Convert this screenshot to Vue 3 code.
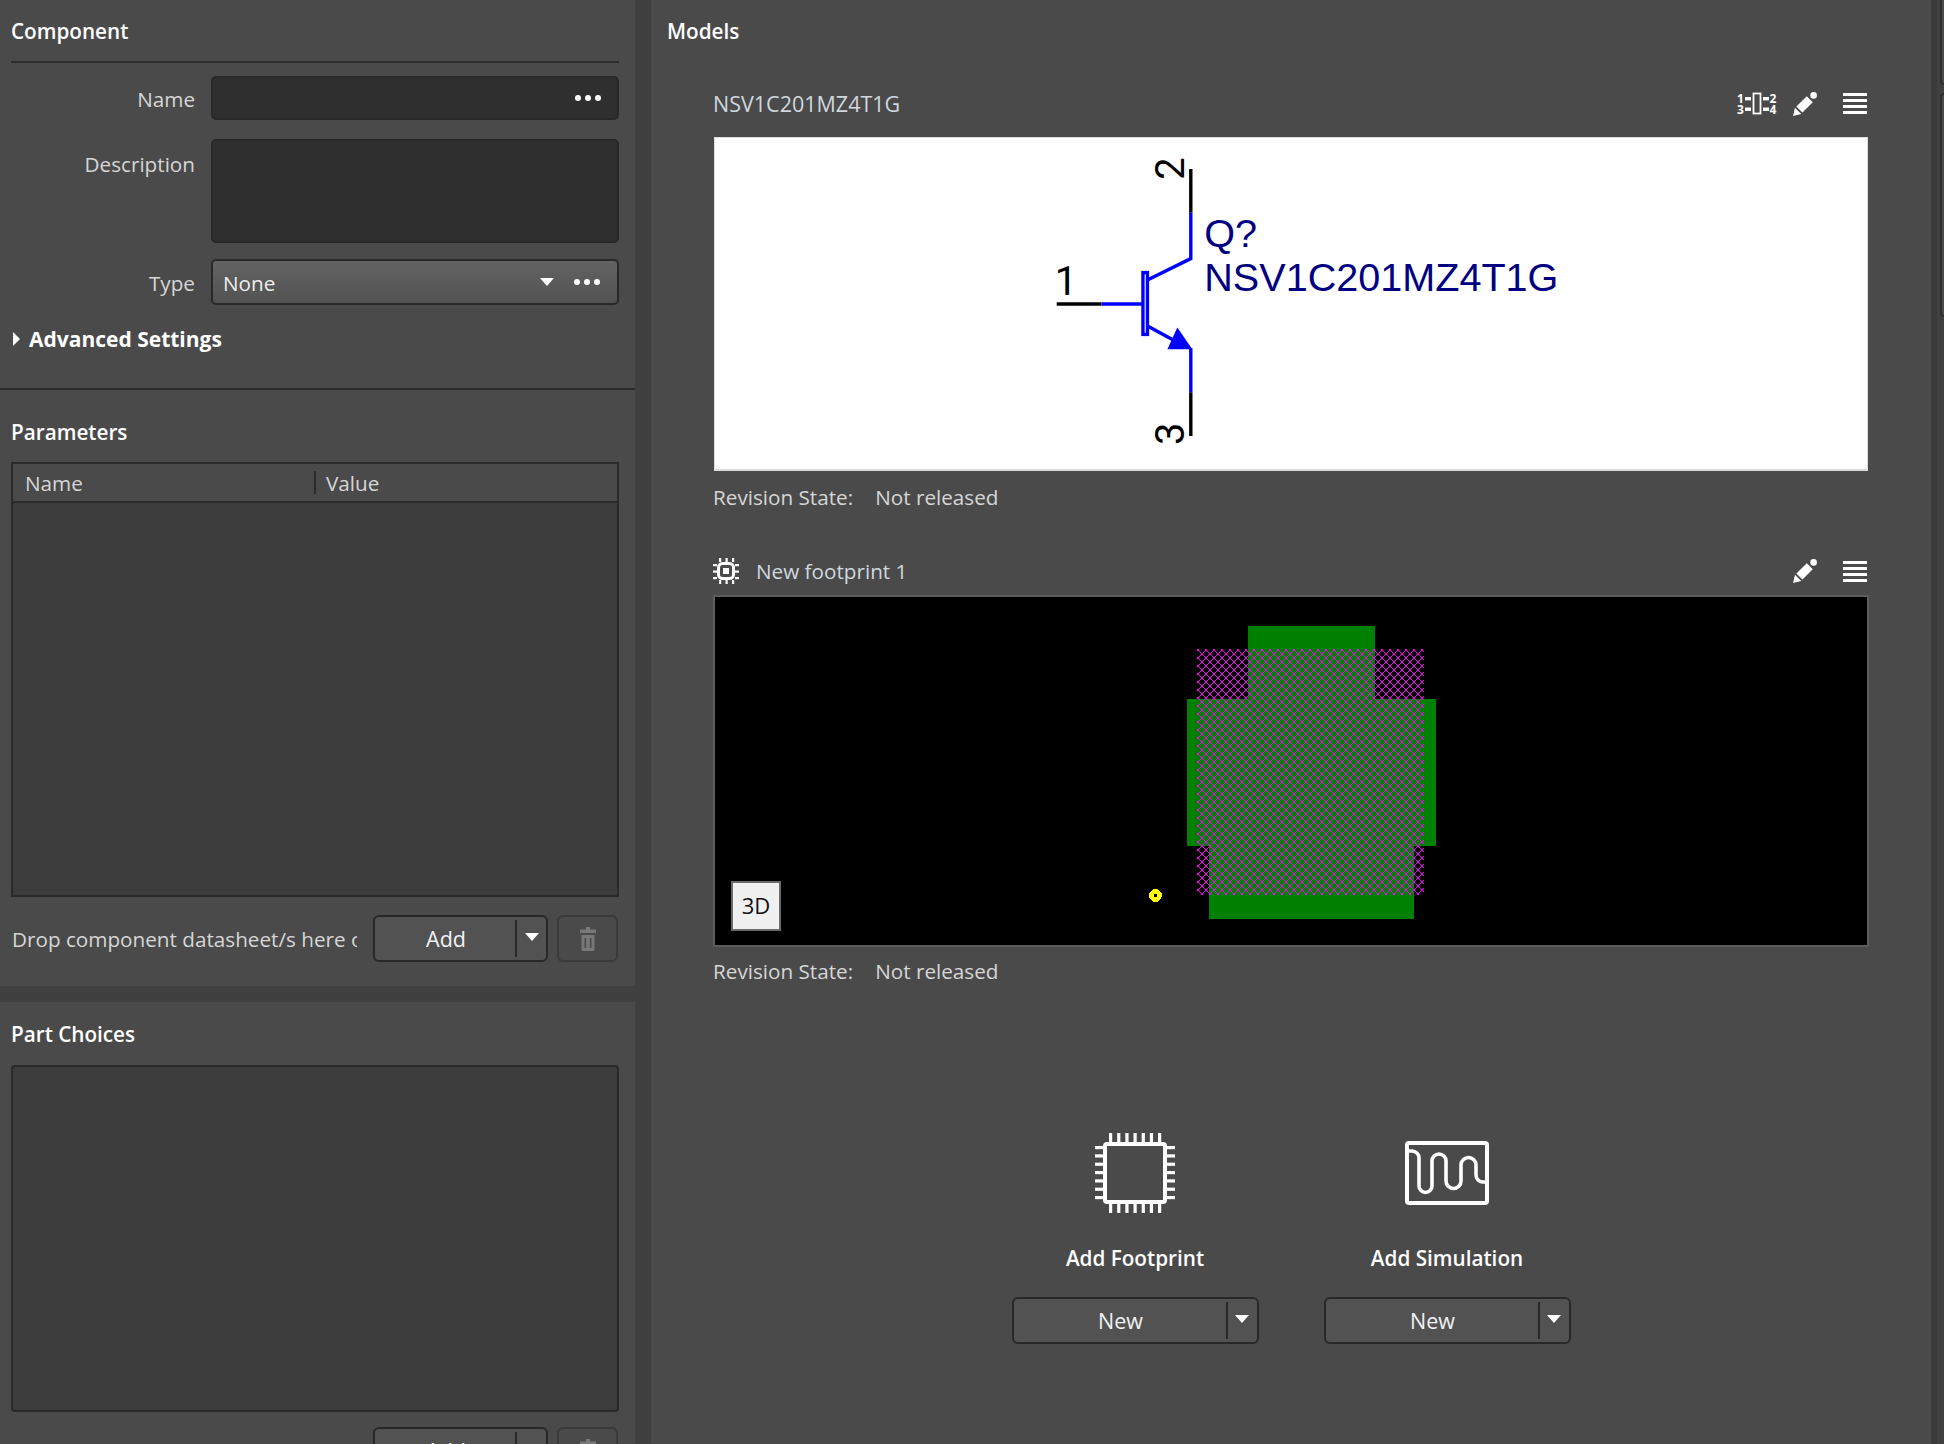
<script setup>
const topPins = [0, 1, 2, 3, 4, 5, 6].map((i) => 14 + i * 8.17)
const sidePins = [0, 1, 2, 3, 4, 5, 6].map((i) => 13 + i * 8.33)
const addCards = [{ label: 'Add Footprint', kind: 'chip' }, { label: 'Add Simulation', kind: 'wave' }]
const smallPins = [5, 11.5, 18]
</script>

<template>
  <div class="app">
    <aside class="left">
      <section class="sec sec-component">
        <h2 class="title title-first">Component</h2>
        <div class="rule"></div>
        <div class="field f-name">
          <label>Name</label>
          <div class="input h-name"><span class="dots"><i></i><i></i><i></i></span></div>
        </div>
        <div class="field f-desc">
          <label class="top">Description</label>
          <div class="input h-desc"></div>
        </div>
        <div class="field f-type">
          <label>Type</label>
          <div class="select">
            <span class="sel-text">None</span>
            <span class="arrow sel-arrow"></span>
            <span class="dots"><i></i><i></i><i></i></span>
          </div>
        </div>
        <div class="advanced"><span class="tri-right"></span><b>Advanced Settings</b></div>
      </section>

      <section class="sec sec-params">
        <h2 class="title title-params">Parameters</h2>
        <div class="table">
          <div class="thead">
            <span class="th-name">Name</span>
            <span class="th-sep"></span>
            <span class="th-value">Value</span>
          </div>
        </div>
        <div class="action-row">
          <span class="drop">Drop component datasheet/s here or browse</span>
          <div class="split split-add"><span class="split-main">Add</span><span class="split-arrow"><span class="arrow"></span></span></div>
          <div class="trash-btn">
            <svg width="16" height="24" viewBox="0 0 16 24" class="trash"><path d="M6 0h4v2.500h6V6H0V2.500h6z" /><path d="M1.500 8h13v14.500a1.500 1.500 0 0 1-1.500 1.500H3a1.500 1.500 0 0 1-1.500-1.500zM4.500 11v10h1.600V11zm5.400 0v10h1.600V11z" fill-rule="evenodd" /></svg>
          </div>
        </div>
      </section>

      <section class="sec sec-parts">
        <h2 class="title title-parts">Part Choices</h2>
        <div class="list"></div>
        <div class="action-row second">
          <span class="drop"></span>
          <div class="split split-add"><span class="split-main">Add</span><span class="split-arrow"><span class="arrow"></span></span></div>
          <div class="trash-btn">
            <svg width="16" height="24" viewBox="0 0 16 24" class="trash"><path d="M6 0h4v2.500h6V6H0V2.500h6z" /><path d="M1.500 8h13v14.500a1.500 1.500 0 0 1-1.500 1.500H3a1.500 1.500 0 0 1-1.500-1.500zM4.500 11v10h1.600V11zm5.400 0v10h1.600V11z" fill-rule="evenodd" /></svg>
          </div>
        </div>
      </section>
    </aside>

    <div class="gutter"></div>

    <main class="right">
      <h2 class="models">Models</h2>

      <div class="model-head head-sym">
        <span class="model-name">NSV1C201MZ4T1G</span>
        <svg class="pins-icon" width="40" height="24" viewBox="0 0 40 24">
          <rect x="16.500" y="1.500" width="7" height="20" fill="none" stroke="#fff" stroke-width="1.800" />
          <rect x="8" y="5" width="6" height="3.400" fill="#fff" />
          <rect x="8" y="15.500" width="6" height="3.400" fill="#fff" />
          <rect x="26" y="5" width="6" height="3.400" fill="#fff" />
          <rect x="26" y="15.500" width="6" height="3.400" fill="#fff" />
          <text x="3.500" y="10.500" class="pin-num">1</text>
          <text x="36" y="10.500" class="pin-num">2</text>
          <text x="3.500" y="22" class="pin-num">3</text>
          <text x="36" y="22" class="pin-num">4</text>
        </svg>
        <svg class="pencil" width="24" height="24" viewBox="0 0 24 24">
          <path d="M0 24l2-8.300 6.300 6.300z" fill="#fff" />
          <path d="M3.400 14.600L13.800 4.200l6 6L9.400 20.600z" fill="#fff" />
          <circle cx="20.600" cy="3.400" r="3.300" fill="#fff" />
        </svg>
        <span class="burger"><i></i><i></i><i></i><i></i></span>
      </div>
      <div class="canvas white">
        <svg class="fill-svg" viewBox="715 138 1152 332">
          <g fill="none" stroke-width="3.400">
            <path d="M1190.500 169V213M1190.500 393V437M1056 304.500H1101" stroke="#000" />
            <path d="M1190.500 213V259L1148 280M1101 304.500H1142M1148 327L1172 340M1190.500 349V393" stroke="#0000ff" />
          </g>
          <rect x="1142.500" y="273" width="4.500" height="62" fill="none" stroke="#0000ff" stroke-width="3.400" />
          <path d="M1177 328L1192 350H1167z" fill="#0000ff" />
          <text x="1054" y="295" class="sch-pin">1</text>
          <text transform="translate(1184 180) rotate(-90)" class="sch-pin">2</text>
          <text transform="translate(1184 446) rotate(-90)" class="sch-pin">3</text>
          <text x="1204" y="247" class="sch-label">Q?</text>
          <text x="1204" y="291" class="sch-label">NSV1C201MZ4T1G</text>
        </svg>
      </div>
      <div class="rev rev-sym"><span>Revision State:</span><span>Not released</span></div>

      <div class="model-head head-fp">
        <svg class="chip-small" width="26" height="26" viewBox="0 0 26 26">
          <rect x="5.500" y="5.500" width="15" height="15" rx="4" fill="none" stroke="#fff" stroke-width="3" />
          <rect x="10" y="10" width="6" height="6" fill="#fff" />
          <template v-for="p in smallPins" :key="p">
            <rect :x="p + 1" y="0" width="2.200" height="4" fill="#fff" />
            <rect :x="p + 1" y="22" width="2.200" height="4" fill="#fff" />
            <rect x="0" :y="p + 1" width="4" height="2.200" fill="#fff" />
            <rect x="22" :y="p + 1" width="4" height="2.200" fill="#fff" />
          </template>
        </svg>
        <span class="model-name fp-name">New footprint 1</span>
        <svg class="pencil" width="24" height="24" viewBox="0 0 24 24">
          <path d="M0 24l2-8.300 6.300 6.300z" fill="#fff" />
          <path d="M3.400 14.600L13.800 4.200l6 6L9.400 20.600z" fill="#fff" />
          <circle cx="20.600" cy="3.400" r="3.300" fill="#fff" />
        </svg>
        <span class="burger"><i></i><i></i><i></i><i></i></span>
      </div>
      <div class="canvas black">
        <svg class="fill-svg" viewBox="715 596 1152 348" shape-rendering="crispEdges">
          <defs>
            <pattern id="hatch" x="1197" y="648" width="8" height="8" patternUnits="userSpaceOnUse">
              <path d="M0 0h2v2H0zM4 4h2v2H4zM2 2h1v1H2zM3 3h1v1H3zM6 6h1v1H6zM7 7h1v1H7zM7 2h1v1H7zM6 3h1v1H6zM3 6h1v1H3zM2 7h1v1H2z" fill="#ff00ff" />
            </pattern>
          </defs>
          <path d="M1248 625H1375V698H1436V845H1414V918H1209V845H1187V698H1248z" fill="#008000" />
          <rect x="1197" y="648" width="227" height="246" fill="url(#hatch)" />
          <circle cx="1155.500" cy="894.500" r="6.400" fill="#ffff00" />
          <circle cx="1155.500" cy="894.500" r="1.500" fill="#000" />
        </svg>
        <button class="btn-3d">3D</button>
      </div>
      <div class="rev rev-fp"><span>Revision State:</span><span>Not released</span></div>

      <div class="adds">
        <div v-for="c in addCards" :key="c.label" class="add-card">
          <div class="add-icon">
            <svg v-if="c.kind === 'chip'" width="80" height="80" viewBox="0 0 80 80" fill="#fff">
              <rect x="10" y="11" width="60" height="58" rx="2" fill="none" stroke="#fff" stroke-width="4" />
              <template v-for="x in topPins" :key="x">
                <rect :x="x" y="0" width="3.200" height="9" />
                <rect :x="x" y="71" width="3.200" height="9" />
              </template>
              <template v-for="y in sidePins" :key="y">
                <rect x="0" :y="y" width="8" height="3.200" />
                <rect x="72" :y="y" width="8" height="3.200" />
              </template>
            </svg>
            <svg v-else width="84" height="64" viewBox="1405 1140 84 64" fill="none" stroke="#fff" stroke-width="4">
              <rect x="1407" y="1142" width="80" height="60" rx="2" />
              <path stroke-width="3.600" d="M1407 1150H1412a7 7 0 0 1 7 7V1185a6.500 6.500 0 0 0 13 0V1160a7 7 0 0 1 14 0V1180a7.500 7.500 0 0 0 15 0V1164a7.500 7.500 0 0 1 15 0V1174a7 7 0 0 0 7 7H1487" />
            </svg>
          </div>
          <div class="add-label">{{ c.label }}</div>
          <div class="split split-new"><span class="split-main">New</span><span class="split-arrow"><span class="arrow"></span></span></div>
        </div>
      </div>
    </main>

    <div class="strip">
      <div class="tab tab-a"></div>
      <div class="tab tab-b"></div>
    </div>
  </div>
</template>

<style>
html, body { margin: 0; background: #404040; }
</style>

<style scoped>
.app {
  display: flex;
  width: 1944px;
  height: 1444px;
  overflow: hidden;
  background: #404040;
  color: #d6d6d6;
  font-family: "Open Sans", "Noto Sans", sans-serif;
  font-size: 20.700px;
}
.left { width: 635px; flex: none; display: flex; flex-direction: column; height: 1444px; overflow: hidden; }
.gutter { width: 16px; flex: none; }
.right { width: 1280px; flex: none; background: #4a4a4a; padding: 0 62px; box-sizing: border-box; }
.strip { width: 7px; flex: none; position: relative; background: #404040; border-left: 6px solid #3a3a3a; overflow: hidden; }
.tab { position: absolute; left: 3px; width: 20px; border: 2px solid #2e2e2e; border-radius: 4px; box-sizing: border-box; background: #4a4a4a; }
.tab-a { top: -10px; height: 95px; }
.tab-b { top: 93px; height: 224px; }

.sec { background: #4a4a4a; padding: 0 16px 0 11px; box-sizing: border-box; flex: none; }
.sec-component { height: 390px; border-bottom: 2px solid #2c2c2c; }
.sec-params { height: 596px; }
.sec-parts { margin-top: 16px; height: 442px; }

.title { margin: 0; font-size: 20.700px; font-weight: 600; color: #fff; display: flex; align-items: center; box-sizing: border-box; }
.title-first { height: 61px; padding-top: 1px; }
.title-params { height: 72px; padding-top: 11px; }
.title-parts { height: 63px; padding-top: 1px; }
.rule { height: 2px; background: #2c2c2c; }

.field { display: flex; gap: 16px; }
.field label { width: 184px; text-align: right; align-self: center; padding-top: 1px; }
.field label.top { align-self: flex-start; padding-top: 11px; }
.f-name { margin-top: 13px; }
.f-desc { margin-top: 19px; }
.f-type { margin-top: 16px; }
.input, .select { flex: 1; box-sizing: border-box; border: 2px solid #282828; border-radius: 5px; }
.input { background: #2f2f2f; position: relative; }
.h-name { height: 44px; display: flex; align-items: center; justify-content: flex-end; padding-right: 16px; }
.h-desc { height: 104px; }
.select { height: 46px; background: linear-gradient(#636363, #525252); display: flex; align-items: center; padding: 0 17px 0 10px; color: #eee; }
.sel-text { flex: 1; padding-top: 1px; }
.sel-arrow { margin-right: 20px; }
.dots { display: flex; gap: 4px; }
.dots i { width: 6px; height: 6px; border-radius: 50%; background: #fff; }
.arrow { display: inline-block; width: 0; height: 0; border-left: 7.500px solid transparent; border-right: 7.500px solid transparent; border-top: 8px solid #fff; }

.advanced { height: 38px; margin-top: 15px; display: flex; align-items: center; color: #fff; padding-left: 2px; gap: 9px; }
.advanced b { font-weight: 700; font-size: 21px; }
.tri-right { width: 0; height: 0; border-top: 7px solid transparent; border-bottom: 7px solid transparent; border-left: 7px solid #fff; }

.table { height: 435px; background: #3c3c3c; border: 2px solid #2a2a2a; box-sizing: border-box; }
.thead { height: 39px; background: #4a4a4a; border-bottom: 2px solid #2a2a2a; box-sizing: border-box; display: flex; align-items: center; position: relative; }
.th-name { margin-left: 12px; width: 289px; }
.th-sep { width: 2px; height: 23px; background: #2a2a2a; }
.th-value { margin-left: 10px; }

.action-row { display: flex; align-items: center; margin-top: 18px; height: 47px; }
.action-row.second { margin-top: 15px; }
.drop { width: 345px; flex: none; margin-left: 1px; margin-right: 16px; white-space: nowrap; overflow: hidden; padding-top: 1px; }
.split { display: flex; box-sizing: border-box; border: 2px solid #282828; border-radius: 6px; background: #525252; color: #f2f2f2; height: 47px; flex: none; }
.split-add { width: 175px; }
.split-new { width: 247px; }
.split-main { flex: 1; display: flex; align-items: center; justify-content: center; position: relative; font-size: 21.500px; }
.split-main::after { content: ""; position: absolute; right: 0; top: 3px; bottom: 3px; width: 2px; background: #282828; }
.split-arrow { width: 29px; display: flex; align-items: center; justify-content: center; flex: none; padding-bottom: 3px; box-sizing: border-box; }
.trash-btn { width: 61px; height: 47px; margin-left: 9px; border: 2px solid #3a3a3a; border-radius: 6px; box-sizing: border-box; display: flex; align-items: center; justify-content: center; flex: none; }
.trash { fill: #787878; }

.list { height: 347px; background: #3c3c3c; border: 2px solid #2a2a2a; border-radius: 4px; box-sizing: border-box; }

.models { margin: 0 0 0 -46px; height: 64px; line-height: 62px; font-size: 20.700px; font-weight: 600; color: #fff; }
.model-head { display: flex; align-items: center; box-sizing: border-box; }
.head-sym { height: 73px; padding-top: 6px; }
.head-fp { height: 71px; padding-top: 23px; }
.model-name { flex: 1; color: #d0d8de; }
.head-sym .model-name { font-size: 21.500px; }
.fp-name { margin-left: 17px; }
.pins-icon { margin-right: 16px; }
.pencil { margin-right: 26px; }
.burger { width: 24px; display: flex; flex-direction: column; gap: 3px; margin-right: 2px; flex: none; }
.burger i { height: 3px; background: #fff; }
.canvas { position: relative; box-sizing: border-box; }
.white { height: 334px; background: #fff; margin: 0 1px; border: 1px solid #dcdcdc; border-width: 1px 1px 2px; }
.black { height: 352px; background: #000; border: 2px solid #5c5c5c; }
.fill-svg { display: block; width: 100%; height: 100%; }
.sch-pin { font-family: Roboto, "Liberation Sans", sans-serif; font-size: 40px; fill: #000; }
.sch-label { font-family: "Liberation Sans", Arial, sans-serif; font-size: 39.700px; fill: #000080; }
.pin-num { font-family: "Open Sans", sans-serif; font-size: 12px; font-weight: 700; fill: #fff; text-anchor: middle; }
.btn-3d { position: absolute; left: 16px; bottom: 14px; width: 50px; height: 50px; background: #f0f0f0; border: 2px solid #6a6a6a; font: 22px "Open Sans", sans-serif; color: #111; padding: 0 0 2px; }
.rev { display: flex; gap: 22px; align-items: center; color: #d6d6d6; box-sizing: border-box; }
.rev-sym { height: 53px; padding-bottom: 2px; }
.rev-fp { height: 48px; }

.adds { display: flex; justify-content: center; gap: 65px; margin-top: 138px; }
.add-card { width: 247px; display: flex; flex-direction: column; align-items: center; }
.add-icon { height: 80px; display: flex; align-items: center; justify-content: center; }
.add-label { height: 84px; box-sizing: border-box; padding-top: 6px; display: flex; align-items: center; color: #fff; font-weight: 600; }
</style>
